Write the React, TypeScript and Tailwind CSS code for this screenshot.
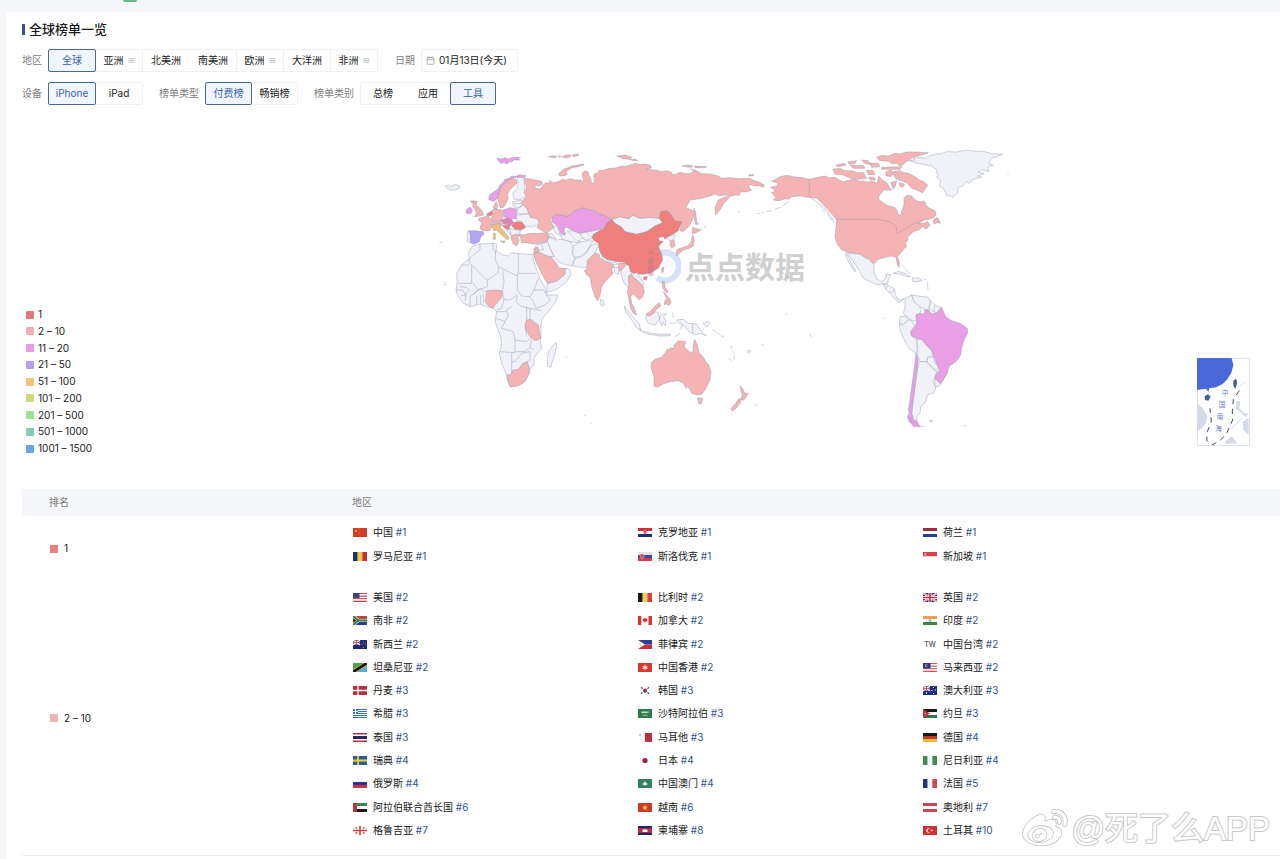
import type { ReactNode } from "react";
import clsx from "clsx";
import { FaWeibo } from "react-icons/fa";
import { FiCalendar, FiMenu } from "react-icons/fi";

type Country = {
    name: string;
    flag: string;
    rank: number;
}

type RankGroup = {
    label: string;
    swatch: string;
    list: string;
    countries: Country[];
}

type Option = {
    label: string;
    menu?: boolean;
}

const RED = '#ef7f7d';
const ROSE = '#f5b3b3';
const PINK = '#e99ee6';
const VIOLET = '#b3a5f0';
const ORANGE = '#f1c07c';
const LAND = '#f1f2f8';

const legend = [
    { label: '1', color: 'bg-[#e07a78]' },
    { label: '2 – 10', color: 'bg-[#f2b0b0]' },
    { label: '11 – 20', color: 'bg-[#e59ce0]' },
    { label: '21 – 50', color: 'bg-[#b5a2ec]' },
    { label: '51 – 100', color: 'bg-[#f0c27a]' },
    { label: '101 – 200', color: 'bg-[#cfd97a]' },
    { label: '201 – 500', color: 'bg-[#9ddf9c]' },
    { label: '501 – 1000', color: 'bg-[#82d0b2]' },
    { label: '1001 – 1500', color: 'bg-[#6aa5ea]' },
];

const regions: Option[] = [
    { label: '全球' },
    { label: '亚洲', menu: true },
    { label: '北美洲' },
    { label: '南美洲' },
    { label: '欧洲', menu: true },
    { label: '大洋洲' },
    { label: '非洲', menu: true },
];

const groups: RankGroup[] = [
    {
        label: '1',
        swatch: 'bg-[#e88381]',
        list: 'h-[47px]',
        countries: [
            { name: '中国', flag: 'cn', rank: 1 },
            { name: '克罗地亚', flag: 'hr', rank: 1 },
            { name: '荷兰', flag: 'nl', rank: 1 },
            { name: '罗马尼亚', flag: 'ro', rank: 1 },
            { name: '斯洛伐克', flag: 'sk', rank: 1 },
            { name: '新加坡', flag: 'sg', rank: 1 },
        ],
    },
    {
        label: '2 – 10',
        swatch: 'bg-[#f3b3b3]',
        list: 'h-[256px]',
        countries: [
            { name: '美国', flag: 'us', rank: 2 },
            { name: '比利时', flag: 'be', rank: 2 },
            { name: '英国', flag: 'gb', rank: 2 },
            { name: '南非', flag: 'za', rank: 2 },
            { name: '加拿大', flag: 'ca', rank: 2 },
            { name: '印度', flag: 'in', rank: 2 },
            { name: '新西兰', flag: 'nz', rank: 2 },
            { name: '菲律宾', flag: 'ph', rank: 2 },
            { name: '中国台湾', flag: 'tw', rank: 2 },
            { name: '坦桑尼亚', flag: 'tz', rank: 2 },
            { name: '中国香港', flag: 'hk', rank: 2 },
            { name: '马来西亚', flag: 'my', rank: 2 },
            { name: '丹麦', flag: 'dk', rank: 3 },
            { name: '韩国', flag: 'kr', rank: 3 },
            { name: '澳大利亚', flag: 'au', rank: 3 },
            { name: '希腊', flag: 'gr', rank: 3 },
            { name: '沙特阿拉伯', flag: 'sa', rank: 3 },
            { name: '约旦', flag: 'jo', rank: 3 },
            { name: '泰国', flag: 'th', rank: 3 },
            { name: '马耳他', flag: 'mt', rank: 3 },
            { name: '德国', flag: 'de', rank: 4 },
            { name: '瑞典', flag: 'se', rank: 4 },
            { name: '日本', flag: 'jp', rank: 4 },
            { name: '尼日利亚', flag: 'ng', rank: 4 },
            { name: '俄罗斯', flag: 'ru', rank: 4 },
            { name: '中国澳门', flag: 'mo', rank: 4 },
            { name: '法国', flag: 'fr', rank: 5 },
            { name: '阿拉伯联合酋长国', flag: 'ae', rank: 6 },
            { name: '越南', flag: 'vn', rank: 6 },
            { name: '奥地利', flag: 'at', rank: 7 },
            { name: '格鲁吉亚', flag: 'ge', rank: 7 },
            { name: '柬埔寨', flag: 'kh', rank: 8 },
            { name: '土耳其', flag: 'tr', rank: 10 },
        ],
    },
];

const rows = (...colors: string[]) => colors.map((c, i) => (
    <rect key={i} y={(i * 9) / colors.length} width="14" height={9 / colors.length} fill={c} />
));

const cols = (...colors: string[]) => colors.map((c, i) => (
    <rect key={i} x={(i * 14) / colors.length} width={14 / colors.length} height="9" fill={c} />
));

const field = (color: string) => <rect width="14" height="9" fill={color} />;

const jack = (
    <>
        <rect width="7" height="5" fill="#2a2f7d" />
        <path d="M0 0L7 5M7 0L0 5" stroke="#fff" strokeWidth="1.2" />
        <path d="M3.5 0V5M0 2.5H7" stroke="#fff" strokeWidth="1.6" />
        <path d="M3.5 0V5M0 2.5H7" stroke="#d0314a" strokeWidth=".8" />
    </>
);

const flags: Record<string, ReactNode> = {
    cn: <>{field('#d23a26')}<circle cx="3" cy="3" r="1.2" fill="#f3a93a" /><path d="M5.5 1h1M6.5 3h1M5.5 5h1" stroke="#f3a93a" strokeWidth=".8" /></>,
    hr: <>{rows('#d8303a', '#fff', '#20306f')}<path d="M5.5 2h3v3L7 6.5 5.5 5z" fill="#d95a6a" /></>,
    nl: rows('#9c2f33', '#fff', '#24458b'),
    ro: cols('#1c2f72', '#f2c53d', '#c22f35'),
    sk: <>{rows('#e6dfe9', '#3b4a9b', '#cf3f4c')}<path d="M2 2h4v3L4 7 2 5z" fill="#cf4a5c" stroke="#fff" strokeWidth=".4" /></>,
    sg: <>{rows('#d9424a', '#fff')}<circle cx="3" cy="2.2" r="1.3" fill="#fff" /><circle cx="3.7" cy="2.2" r="1.2" fill="#d9424a" /></>,
    us: <>{rows('#c9404f', '#fff', '#c9404f', '#fff', '#c9404f', '#fff', '#c9404f')}<rect width="6.5" height="5" fill="#3b4778" /></>,
    be: cols('#191919', '#f4cf55', '#d9403b'),
    gb: (
        <>
            {field('#2d3576')}
            <path d="M0 0L14 9M14 0L0 9" stroke="#fff" strokeWidth="2" />
            <path d="M0 0L14 9M14 0L0 9" stroke="#c8324a" strokeWidth=".7" />
            <path d="M7 0V9M0 4.5H14" stroke="#fff" strokeWidth="3" />
            <path d="M7 0V9M0 4.5H14" stroke="#c8324a" strokeWidth="1.7" />
        </>
    ),
    za: (
        <>
            {rows('#c8433a', '#2b3c86')}
            <path d="M0 0L5.5 4.5 0 9M5 4.5H14" fill="none" stroke="#fff" strokeWidth="3.2" />
            <path d="M0 0L5.5 4.5 0 9M5 4.5H14" fill="none" stroke="#2d7a4b" strokeWidth="2" />
            <path d="M0 1.8L3.5 4.5 0 7.2z" fill="#191919" stroke="#e9b94a" strokeWidth=".6" />
        </>
    ),
    ca: <>{cols('#d8352f', '#fff', '#fff', '#d8352f')}<path d="M7 1.5l1 1.3 1.500.2-.5 2.200-1.600.6L7 7.500l-.4-1.700L5 5.200 4.500 3 6 2.800z" fill="#d8352f" /></>,
    in: <>{rows('#eda04c', '#fff', '#3b8640')}<circle cx="7" cy="4.5" r="1" fill="none" stroke="#4a4f9b" strokeWidth=".6" /></>,
    nz: <>{field('#1f2b70')}{jack}<path d="M10.5 1.5v1M9 4v1M12 3.5v1M10.5 7v1" stroke="#d65a70" /></>,
    ph: <>{rows('#2d3f94', '#c5303c')}<path d="M0 0L7 4.5 0 9z" fill="#fff" /><circle cx="2.2" cy="4.5" r=".9" fill="#efbf4a" /></>,
    tw: <text x="7" y="7" textAnchor="middle" className="text-[7px] font-medium" fill="#555">TW</text>,
    tz: <><path d="M0 0H14L0 9z" fill="#4ea352" /><path d="M14 0V9H0z" fill="#58aed6" /><path d="M0 9L14 0" stroke="#ecc94a" strokeWidth="4" /><path d="M0 9L14 0" stroke="#191919" strokeWidth="2.8" /></>,
    hk: <>{field('#d23b2b')}<path d="M7 1.8v5.4M4.5 3.5l5 2M9.5 3.5l-5 2" stroke="#fff" strokeWidth="1" /></>,
    my: <>{rows('#d8525c', '#fff', '#d8525c', '#fff', '#d8525c', '#fff', '#d8525c')}<rect width="7.5" height="5.5" fill="#2d3a80" /><circle cx="3.5" cy="2.7" r="1.4" fill="#d9cf7d" /><circle cx="4.2" cy="2.7" r="1.1" fill="#2d3a80" /></>,
    dk: <>{field('#b8303f')}<path d="M5 0V9M0 4.5H14" stroke="#fff" strokeWidth="1.3" /></>,
    kr: (
        <>
            {field('#fff')}
            <circle cx="7" cy="4.5" r="2" fill="#c23345" />
            <path d="M5 4.5a2 2 0 0 0 4 0z" fill="#2c4a92" />
            <path d="M3 1.5l1.5 1M3 7.5l1.5-1M11 1.5l-1.5 1M11 7.5l-1.5-1" stroke="#333" strokeWidth="1.2" />
        </>
    ),
    au: <>{field('#1f2d80')}{jack}<path d="M3.5 6.2v1.6M10.5 1v1M9 4v1M12.3 3.5v1M10.5 7v1" stroke="#fff" /></>,
    gr: (
        <>
            {rows('#3674b8', '#fff', '#3674b8', '#fff', '#3674b8', '#fff', '#3674b8', '#fff', '#3674b8')}
            <rect width="5" height="5" fill="#3674b8" />
            <path d="M2.5 0V5M0 2.5H5" stroke="#fff" />
        </>
    ),
    sa: <>{field('#2e7d46')}<path d="M3.5 3.2h7" stroke="#fff" strokeWidth="1.6" strokeDasharray="1.2 .4" /><path d="M4.5 6.2h5" stroke="#fff" strokeWidth=".6" /></>,
    jo: <>{rows('#191919', '#fff', '#2e7a48')}<path d="M0 0L7 4.5 0 9z" fill="#c5303a" /><circle cx="2.2" cy="4.5" r=".6" fill="#fff" /></>,
    th: <><rect width="14" height="9" fill="#a8323f" /><rect y="1.5" width="14" height="6" fill="#fff" /><rect y="3" width="14" height="3" fill="#28295c" /></>,
    mt: <>{cols('#fff', '#bf2f40')}<path d="M2 1v2M1 2h2" stroke="#b9b9b9" strokeWidth=".8" /></>,
    de: rows('#191919', '#c53a24', '#f0b83a'),
    se: <>{field('#2b5f94')}<path d="M5 0V9M0 4.5H14" stroke="#f0cf3f" strokeWidth="1.8" /></>,
    jp: <>{field('#fff')}<circle cx="7" cy="4.5" r="2.6" fill="#a81f38" /></>,
    ng: cols('#3d8a5b', '#fff', '#3d8a5b'),
    ru: rows('#fff', '#2a2f9c', '#cf3346'),
    mo: <>{field('#348062')}<path d="M7 1.8l1.2 2.2 1.5.7-1.2 1.5h-3L4.3 4.7 5.8 4z" fill="#e4f1dc" /></>,
    fr: cols('#22327c', '#fff', '#cf4a52'),
    ae: <>{rows('#3b8650', '#fff', '#191919')}<rect width="4" height="9" fill="#b93a35" /></>,
    vn: <>{field('#cf3a26')}<path d="M7 1.8l.8 1.9h2L8.2 5l.6 2L7 5.9 5.2 7l.6-2-1.6-1.3h2z" fill="#f6d448" /></>,
    at: rows('#c74852', '#fff', '#c74852'),
    ge: <>{field('#fff')}<path d="M7 0V9M0 4.5H14" stroke="#d83a3a" strokeWidth="1.6" /><path d="M2.5 2h1.6M10 2h1.6M2.5 7h1.6M10 7h1.6" stroke="#d83a3a" strokeWidth="1.4" /></>,
    kh: <><rect width="14" height="9" fill="#25255f" /><rect y="2.2" width="14" height="4.6" fill="#c22e48" /><path d="M4.5 6V4l1-.8.8.8.7-1.5.7 1.5.8-.8 1 .8v2z" fill="#fff" /></>,
    tr: <>{field('#d2302f')}<circle cx="5.5" cy="4.5" r="2.2" fill="#fff" /><circle cx="6.2" cy="4.5" r="1.7" fill="#d2302f" /><circle cx="9" cy="4.5" r=".8" fill="#fff" /></>,
};

// Country outlines, grouped by the part of the map they belong to
const eurasia = [
    { fill: LAND, d: 'M45 138L55 135 62 140 75 134 88 137 90 144 75 150 60 150 50 144Z' },
    { fill: LAND, d: 'M262 112L280 112 285 125 283 150 288 165 275 178 252 178 248 160 262 145 265 130Z' },
    { fill: LAND, d: 'M248 185L276 180 278 195 265 205 250 200ZM250 192L277 189M262 205L280 195 292 207 297 220 262 222Z' },
    { fill: LAND, d: 'M260 225L298 222 325 238 328 250 308 262 290 258 282 262 275 245 258 240Z' },
    { fill: LAND, d: 'M225 262L250 268 272 272 268 283 245 287 235 275ZM240 266L243 285' },
    { fill: LAND, d: 'M112 275L120 275 122 290 120 308 112 306Z' },
    { fill: LAND, d: 'M345 280L368 282 378 298 360 290ZM365 255L382 262 392 285 378 282 370 268Z' },
    { fill: LAND, d: 'M392 285L405 283 412 272 430 273 450 281 475 275 515 268 490 285 488 295 470 300 455 295 445 308 420 305 395 298ZM415 275L435 297 455 307M450 282L462 297M470 276L480 290 490 288' },
    { fill: LAND, d: 'M357 290L375 300 395 298 420 305 430 318 428 340 435 355 425 378 400 372 385 365 370 345 360 325 352 305Z' },
    { fill: LAND, d: 'M430 318L445 308 470 302 490 303 480 318 470 335 450 350 432 352 428 340Z' },
    { fill: LAND, d: 'M435 355L455 350 472 335 482 318 498 310 505 320 490 345 475 362 470 382 455 382 428 378Z' },
    { fill: LAND, d: 'M318 315L340 310 352 305 360 325 372 350 350 350 330 340 315 335ZM335 312L340 328 322 333' },
    { fill: LAND, d: 'M352 432L380 424 405 403 406 385 420 390 424 402 410 425 385 445 350 458Z' },
    { fill: LAND, d: 'M515 348L545 366 560 368 560 375 545 372 520 360ZM552 380L564 382 567 402 555 399ZM512 478L520 483 523 495 515 499 510 491Z' },
    { fill: LAND, d: 'M575 385L588 372 598 380 600 395 608 405 595 415 598 440 600 460 590 435 582 430 572 400Z' },
    { fill: LAND, d: 'M545 238L570 230 597 236 608 225 630 235 660 232 688 235 698 248 675 258 650 275 620 283 585 275 575 262 555 250Z' },
    { fill: PINK, d: 'M200 55L214 57 225 53 236 57 245 53 272 52 262 57 270 60 250 60 246 66 240 64 232 72 222 68 212 70 205 62Z' },
    { fill: PINK, d: 'M178 165L176 178 190 185 203 175 207 160 212 145 225 130 240 118 260 112 285 112 288 107 270 104 258 109 245 108 238 115 225 118 220 126 210 135 206 144 200 150 188 158Z' },
    { fill: PINK, d: 'M218 210L240 203 260 207 258 235 240 238 222 230Z' },
    { fill: PINK, d: 'M110 208L120 202 127 208 124 220 112 222 108 215Z' },
    { fill: PINK, d: 'M367 232L378 224 395 225 410 229 425 222 430 214 440 210 460 203 475 209 495 212 508 222 520 225 545 238 530 250 522 265 505 268 490 272 470 275 450 280 430 272 410 262 402 266 405 285 392 280 385 262 372 250 365 245Z' },
    { fill: '#dd86b4', d: 'M212 240L232 234 246 240 252 248 240 258 222 252Z' },
    { fill: VIOLET, d: 'M115 272L135 272 160 275 162 282 152 292 148 305 132 313 121 308 122 290 120 278Z' },
    { fill: ROSE, d: 'M283 115L305 118 335 124 337 133 328 137 312 136 318 145 330 148 340 135 346 128 358 130 358 122 370 128 385 125 398 118 408 121 420 116 436 120 452 120 462 126 458 112 456 100 464 93 474 95 478 108 484 120 484 132 492 128 494 118 490 108 496 100 505 98 505 92 522 90 540 85 556 84 575 78 585 80 600 75 615 70 630 73 645 72 660 75 665 83 650 88 680 91 695 95 710 92 722 95 728 104 738 103 750 97 768 101 785 100 790 92 805 95 815 101 840 102 865 108 875 115 900 113 930 116 960 115 972 122 985 125 1003 135 1000 142 987 137 975 138 962 134 955 140 965 150 950 156 932 155 928 166 915 165 900 170 890 164 870 168 855 162 840 168 825 172 810 176 780 180 774 192 768 203 790 212 790 232 780 255 768 268 758 275 750 272 755 245 735 243 722 222 710 212 692 215 688 235 660 232 630 235 608 225 597 236 570 230 545 238 520 225 508 222 495 212 475 209 460 203 440 210 430 214 425 222 410 229 395 225 378 224 367 232 360 240 372 262 355 275 350 280 330 268 320 262 328 250 325 238 300 232 297 222 290 205 276 190 283 175 290 168 282 158 287 150 290 138 283 130Z' },
    { fill: ROSE, d: 'M385 103L392 95 400 88 412 84 425 78 440 76 462 72 460 76 425 84 408 95 412 104 400 108 390 108Z' },
    { fill: ROSE, d: 'M355 50L370 47 382 50 372 53ZM386 47L394 49 388 52ZM396 51L410 44 424 46 418 52 406 54ZM426 45L446 42 444 48 432 50ZM560 48L585 45 605 52 600 58 580 56ZM600 58L618 58 623 63 608 62ZM755 78L775 75 790 79 778 82ZM794 78L830 80 825 83 796 83ZM782 86L800 92 785 90ZM957 104L971 104 971 107 957 108Z' },
    { fill: ROSE, d: 'M203 175L208 155 214 140 230 125 245 115 258 118 262 128 250 140 238 150 232 165 235 175 228 190 222 200 212 205 208 195Z' },
    { fill: ROSE, d: 'M190 200L198 185 203 195 200 207 192 207ZM187 210L200 207 215 210 220 230 212 243 190 245 185 230Z' },
    { fill: ROSE, d: 'M147 235L165 230 172 226 188 240 185 260 180 272 160 272 150 265 155 248 145 240ZM190 248L215 243 222 250 205 258 188 256Z' },
    { fill: ROSE, d: 'M122 182L132 184 126 190ZM130 182L142 184 138 195 150 205 158 215 160 225 145 229 132 230 140 220 135 208 128 198Z' },
    { fill: ROSE, d: 'M243 288L258 283 270 285 262 292 268 302 260 318 250 312 245 300ZM268 283L280 285 300 280 325 280 352 278 358 292 350 305 330 310 310 312 290 308 275 308 272 295Z' },
    { fill: ROSE, d: 'M310 340L328 337 345 345 365 352 378 368 388 385 404 385 405 402 380 422 352 430 340 410 325 380 315 358ZM312 325L324 322 326 336 312 338Z' },
    { fill: ROSE, d: 'M497 338L510 345 508 352 522 362 545 372 552 378 545 388 550 400 540 410 525 425 515 440 510 465 503 483 495 470 485 440 480 410 470 405 463 392 472 385 472 362 488 345ZM565 370L590 370 580 385 570 395 565 380Z' },
    { fill: RED, d: 'M170 222L185 213 187 222 180 228 172 226ZM250 250L258 245 275 246 288 262 275 270 255 268 245 258ZM215 255L240 258 235 270 222 262Z' },
    { fill: RED, d: 'M545 238L530 250 522 265 490 283 487 292 490 300 505 310 508 330 515 345 530 358 560 365 582 367 598 378 602 395 615 402 640 403 660 400 685 385 698 360 695 340 685 320 700 303 688 303 685 293 700 290 705 298 725 285 745 272 755 245 735 243 722 222 710 212 692 215 688 235 698 248 675 258 650 275 620 283 585 275 575 262 555 250Z' },
    { fill: ORANGE, d: 'M185 255L210 250 212 262 228 282 238 293 232 300 215 285 200 270 190 272ZM210 303L225 303 222 310ZM190 280H196V298H190Z' },
];

const eastAsia = [
    { fill: ROSE, d: 'M85 408L95 402 100 412 112 420 128 435 133 455 128 470 118 480 108 470 100 462 92 470 95 490 88 485 82 455 88 435Z' },
    { fill: LAND, d: 'M95 402L112 398 120 412 132 432 128 436 112 420 100 412Z' },
    { fill: ROSE, d: 'M88 485L98 495 105 510 110 525 100 520 92 505ZM138 522L150 515 165 498 178 488 182 498 170 508 158 522 145 528Z' },
    { fill: ROSE, d: 'M185 385L191 380 192 388 188 400 184 392ZM185 425L193 423 195 443 205 455 199 458 189 446ZM195 480L207 472 213 487 207 497 199 492 193 494ZM190 455L198 463 204 471 198 473Z' },
    { fill: RED, d: 'M132 410L142 410 139 420 131 418Z' },
    { fill: LAND, d: 'M198 293L225 282 222 298 210 303Z' },
    { fill: ROSE, d: 'M212 303L222 300 225 318 215 325 210 315ZM228 338L232 328 250 322 262 318 272 308 278 285 283 300 280 318 265 326 250 330 238 340 230 347ZM278 262L293 267 303 270 288 278 276 282Z' },
    { fill: ROSE, d: 'M282 205L287 215 290 245 295 253 287 253 282 233ZM355 180L380 168 388 172 372 190 360 210 347 225 345 205 348 195ZM302 268L308 265M312 262L318 258' },
    { fill: ROSE, d: 'M500 215L515 212M525 208L545 200M548 196L565 186M415 214L420 215M470 221L480 220M485 220L490 218' },
    { fill: LAND, d: 'M545 398L552 400M555 402L560 406M562 408L568 412 564 416Z' },
];

const oceania = [
    { fill: ROSE, d: 'M155 245L165 238 185 232 198 215 202 208 210 210 210 203 222 205 222 196 228 190 232 184 240 183 258 185 252 200 268 215 278 218 280 195 284 178 292 195 298 218 310 232 318 246 325 252 333 275 330 300 318 325 305 343 290 345 275 340 268 325 262 320 258 325 250 310 235 302 210 305 190 312 172 322 162 318 162 290 153 262Z' },
    { fill: ROSE, d: 'M293 353L308 355 305 370 297 373ZM420 318L428 326 433 338 445 341 437 353 431 361 423 357 427 345 423 333ZM425 355L420 370 408 385 398 393 392 387 406 371 416 357Z' },
    { fill: LAND, d: 'M72 78L85 95 100 112 118 132 122 150 108 142 92 115 78 98ZM118 150L145 158 180 163 212 162 210 167 180 168 140 162Z' },
    { fill: LAND, d: 'M138 105L150 108 168 95 175 100 180 115 165 135 145 130 138 118ZM180 105L200 102 190 110 198 122 196 137 190 127 184 137 178 122Z' },
    { fill: LAND, d: 'M230 120L250 118 265 130 290 132 305 155 320 168 300 160 285 165 268 155 250 135 240 132ZM278 131V161M310 130L325 125 330 130 318 142Z' },
    { fill: LAND, d: 'M338 148L348 156M350 158L360 164M362 166L372 171M393 195L395 207M398 212L402 220M383 233L395 243M402 226L403 240M440 213L448 210 453 213 445 219ZM484 194L492 196M218 98L220 115M210 130L230 128M238 125L248 135 240 150M225 170L240 160' },
    { fill: LAND, d: 'M463 374L470 377M630 160L634 172M556 100L562 103' },
];

const northAmerica = [
    { fill: ROSE, d: 'M-85 124L-72 118 -60 110 -40 106 -20 110 0 112 30 118 52 112 75 108 88 113 105 112 118 120 130 125 148 120 165 118 178 124 190 122 202 127 215 123 232 130 236 108 245 118 262 130 268 142 275 150 250 150 246 158 238 165 236 176 242 183 260 195 285 203 292 212 292 220 302 228 306 210 312 195 312 175 322 165 335 168 342 178 352 183 362 186 372 182 378 195 388 205 405 212 408 225 398 235 375 240 355 250 372 250 382 244 390 255 378 268 368 258 360 268 340 275 322 292 325 300 315 308 320 318 305 335 292 350 298 365 298 382 292 375 288 352 275 348 258 352 235 358 225 368 218 372 210 358 195 352 180 342 150 338 125 330 112 312 105 292 108 262 110 240 98 225 80 205 65 188 50 175 25 172 0 168 -25 170 -35 178 -45 176 -62 182 -80 180 -72 172 -80 165 -85 158 -74 152 -88 142 -70 138 -65 130Z' },
    { fill: 'none', d: 'M108 238H235L268 245 288 258 292 280 305 272 325 262 340 252 358 245M28 117V172M30 172L50 185 70 200 85 220 102 240M62 198L70 212 76 214M82 220L88 232 98 240M92 236L104 248' },
    { fill: ROSE, d: 'M400 240L412 232 422 250 410 248 402 252ZM280 95L300 92 312 98 325 100 345 110 358 120 372 125 383 135 375 148 368 158 350 150 335 145 322 130 305 122 290 118 282 108Z' },
    { fill: ROSE, d: 'M98 88L120 85 135 92 155 92 172 98 190 97 200 115 175 118 150 115 130 105 105 103ZM108 75L133 70 138 76 113 80ZM145 65L170 62 165 70 147 72ZM185 60L205 62 213 74 193 70ZM150 75L190 77 195 85 160 85ZM200 90L220 92 225 104 205 104ZM210 70L235 70 240 80 215 82ZM205 112L222 112 226 120 212 120Z' },
    { fill: ROSE, d: 'M230 52L245 46 265 48 285 40 300 42 320 36 345 36 385 38 365 45 340 52 328 60 318 65 308 75 300 78 290 70 275 72 268 64 240 62ZM258 95L273 90 281 98 273 110 258 107ZM245 82L305 80 300 88 245 88ZM272 128L290 122 285 140 280 148ZM298 128L314 132 308 142 298 138Z' },
    { fill: LAND, d: 'M328 62L345 60 340 55 360 52 375 55 395 45 420 42 440 35 470 36 500 30 525 34 545 33 580 42 608 43 575 55 565 70 580 76 562 82 568 95 545 88 534 96 552 102 532 108 545 112 520 118 508 130 500 125 488 138 475 142 472 160 460 172 440 165 430 145 418 138 422 120 410 112 416 104 408 98 412 90 395 78 365 72 345 68ZM622 104L626 105' },
    { fill: LAND, d: 'M140 335L150 340 180 343 195 353 210 360 222 375 222 395 228 415 245 425 258 415 260 402 272 405 265 420 262 432 248 430 235 435 210 425 190 415 180 395 162 368 148 348ZM138 338L146 353 156 373 168 395 162 392 148 370 136 345Z' },
    { fill: LAND, d: 'M248 432L262 435 282 445 286 460 290 475 305 480 312 475 300 488 285 478 272 462 258 448ZM262 436L258 447M284 450L270 458M280 400L295 394 315 400 332 410 320 410 300 402ZM338 413L358 415 366 421 351 425 336 423ZM305 375L315 385M318 388L328 402M382 425L384 450M372 416L380 420' },
];

const southAmerica = [
    { fill: LAND, d: 'M195 115L215 105 222 125 240 135 242 160 228 165 230 185 215 180 200 170 190 160 195 140Z' },
    { fill: LAND, d: 'M215 105L235 108 265 112 272 125 265 145 268 152 255 148 240 140 222 125Z' },
    { fill: LAND, d: 'M272 122L285 135 300 142 302 150 290 158 278 155 268 145ZM284 136L282 156' },
    { fill: LAND, d: 'M180 170L198 168 205 180 188 195 178 188Z' },
    { fill: LAND, d: 'M178 190L188 195 205 180 215 182 225 198 212 215 215 228 230 238 232 270 228 280 210 268 195 245 182 215Z' },
    { fill: LAND, d: 'M232 238L245 238 262 258 275 272 280 290 265 292 260 305 240 305 232 285Z' },
    { fill: LAND, d: 'M262 292L280 290 285 310 296 318 290 335 275 320 262 308Z' },
    { fill: LAND, d: 'M240 305L260 305 275 322 290 335 286 350 280 365 288 382 282 398 262 405 258 425 242 440 240 460 230 470 232 485 222 480 215 460 220 420 225 380 230 340 235 315Z' },
    { fill: LAND, d: 'M286 352L302 372 296 380 284 378ZM268 482L278 482 276 486ZM370 496L378 499M130 172L134 178M240 500L255 498' },
    { fill: PINK, d: 'M228 165L238 160 252 162 255 148 268 152 275 162 290 158 300 148 304 140 310 155 318 172 335 182 360 190 382 205 383 220 372 240 365 262 362 285 348 305 328 318 322 340 310 360 302 372 288 358 285 350 298 330 290 312 282 290 275 270 258 255 245 238 230 235 215 228 212 215 225 200 230 185Z' },
    { fill: PINK, d: 'M228 280L235 300 232 325 228 355 224 390 218 430 215 460 220 480 232 485 240 500 220 499 205 480 202 468 208 462 205 450 210 420 215 380 222 330 226 300ZM206 470L216 478M210 484L224 490' },
];

const africa = [
    { fill: LAND, d: 'M128 18L150 12 192 10 200 14 198 32 218 45 235 48 245 38 262 40 300 44 308 42 310 60 320 90 330 118 345 142 350 165 383 165 378 185 355 215 338 235 333 255 333 290 330 300 335 325 322 340 312 355 312 375 300 385 295 405 280 428 262 438 240 440 232 420 228 400 215 370 208 340 215 315 212 290 200 260 195 240 200 215 190 205 170 200 150 192 120 200 98 188 82 165 78 150 82 125 80 100 95 75 118 55 115 40Z' },
    { fill: 'none', d: 'M265 40V100H318M198 30L195 55 205 80 225 90 262 108M188 10L190 28 198 40M118 58L135 40 150 30 150 12M118 58V68L165 115 172 120 205 98V80M95 75H118M125 75V130H85M128 128L145 150 172 140 172 120' },
    { fill: 'none', d: 'M218 92L222 125 218 150M262 100V150L275 168 300 170 312 150 325 115M218 178L240 180 262 165M262 168L258 185 275 200 300 205M245 200L228 210 235 225 225 245 215 265 250 275 255 300 290 305 305 290M290 200V240L285 260 290 290' },
    { fill: 'none', d: 'M312 150L340 150 360 180 345 195 318 205 308 180 300 172M300 205L333 212M300 205V238M208 335L255 338V300M255 335L285 335 300 322 305 300M245 340V400M245 365H255L275 340M275 340L300 335V360L285 370M300 322L312 330M218 155L222 178 215 205 200 210M200 215H228M198 235L212 240 225 245' },
    { fill: 'none', d: 'M78 150H98L108 170M110 155L105 182M90 140L110 142 120 155M92 168L105 165M120 170V200M140 168V195M152 165V193M160 160V188M120 170L150 145 168 155M145 150L128 165' },
    { fill: ROSE, d: 'M232 405L245 402 248 390 265 388 278 370 292 365 298 385 298 400 285 425 265 437 242 440 235 425Z' },
    { fill: ROSE, d: 'M290 240L302 238 325 255 328 275 333 295 315 302 300 290 288 270 286 255ZM170 152L195 150 218 152 215 172 200 190 188 205 175 198 166 185 168 165Z' },
    { fill: LAND, d: 'M355 335L370 315 378 308 380 322 372 350 362 382 352 378 352 355ZM273 413L279 410 282 414 278 417ZM402 352L406 356M408 348L412 351M462 525L468 528M482 548L486 551M42 125L46 128M40 135L48 132M28 6L36 8' },
];

const mapParts = [
    { offset: 'translate(0 300)', shapes: africa },
    { offset: 'translate(0 0)', shapes: eurasia },
    { offset: 'translate(510 0)', shapes: eastAsia },
    { offset: 'translate(510 420)', shapes: oceania },
    { offset: 'translate(1110 0)', shapes: northAmerica },
    { offset: 'translate(1230 360)', shapes: southAmerica },
];

function WorldMap() {
    return (
        <div className="relative self-start">
            <svg viewBox="0 0 1800 900" className="w-full" stroke="#8f97ae" strokeWidth="1.3" strokeLinejoin="round">
                {mapParts.map((part) => (
                    <g key={part.offset} transform={part.offset}>
                        {part.shapes.map((shape) => (
                            <path key={shape.d} d={shape.d} fill={shape.fill} />
                        ))}
                    </g>
                ))}
            </svg>
            <div className="absolute top-[108px] left-[213px] flex items-center gap-1 text-[#8c8c8c] opacity-40">
                <svg viewBox="0 0 38 38" className="size-[38px]" fill="none" stroke="#9db9f2">
                    <path d="M8 3v3M8 10v18" strokeWidth="5" stroke="#b07890" />
                    <path d="M18 5a14 14 0 1 1-4 25" strokeWidth="6" />
                </svg>
                <span className="text-[30px] leading-[38px] font-bold">点点数据</span>
            </div>
        </div>
    )
}

function SouthSeaInset() {
    return (
        <svg viewBox="81 54 159 264" className="mb-[10px] ml-[167px] h-[88px] w-[53px] self-end">
            <rect x="82" y="55" width="156" height="261" fill="#fff" stroke="#ccd5e6" strokeWidth="2" />
            <path d="M81 190L95 200 112 228 108 250 92 268 81 275ZM200 182L212 185 208 205 222 218 235 222 228 232 210 215 198 205ZM218 245L236 235V285L220 270ZM165 305L185 288 202 310 168 312Z" fill="#d5daeb" />
            <path d="M185 265L215 235M208 140L225 125" stroke="#d5daeb" strokeWidth="3" />
            <path d="M81 54H185L190 75 184 98 172 118 158 132 138 142 118 145 115 156 108 146 81 150Z" fill="#4a68d8" />
            <path d="M104 168L114 163 122 170 115 182 105 180ZM190 122L198 116 202 128 196 146 190 138Z" fill="#41629e" />
            <path d="M208 152L190 178 187 215 188 240 170 280 150 302 128 314 110 302 112 275 124 245 120 205" fill="none" stroke="#3f4a6b" strokeWidth="3" strokeDasharray="16 14" />
            <g fill="#6780d8" className="text-[20px]" textAnchor="middle">
                <text x="165" y="164">中</text>
                <text x="156" y="200">国</text>
                <text x="150" y="237">南</text>
                <text x="146" y="273">海</text>
            </g>
        </svg>
    )
}

function Filter({ title, options, active, width = 'min-w-[48px]' }: { title: string, options: Option[], active: string, width?: string }) {
    return (
        <div className="flex items-center gap-[6px]" role="group" aria-label={title}>
            <span className="text-[#808080]">{title}</span>
            <div className="flex rounded-[2px] border border-[#eff0f3]">
                {options.map(({ label, menu }) => (
                    <button
                        key={label}
                        type="button"
                        aria-pressed={label === active}
                        className={clsx(
                            '-m-px flex h-[23px] items-center justify-center gap-1 border px-1 not-last:mr-0',
                            width,
                            label === active
                                ? 'relative rounded-[2px] border-[#4a6796] bg-[#f0f6ff] text-[#3a5fa8]'
                                : 'border-transparent',
                            menu && 'border-x-[#eff0f3]',
                        )}
                    >
                        {label}
                        {menu && <FiMenu className="size-[7px] text-[#999]" />}
                    </button>
                ))}
            </div>
        </div>
    )
}

export default function App() {
    return (
        <div className="min-h-screen overflow-x-hidden bg-[#f5f7fb] pl-[6px] font-['Inter','Noto_Sans_CJK_SC',sans-serif] text-[10px] leading-[15px] text-[#1a1a1a]">
            <header className="h-3">
                <div className="ml-[117px] h-[2px] w-[14px] rounded-b bg-[#63bd82]" />
            </header>
            <main className="relative min-h-[847px] rounded-tl-[2px] bg-white pl-4">
                <h1 className="flex items-center gap-1 pt-2 text-[13px] leading-[19px] font-medium">
                    <span className="h-[11px] w-[3px] bg-[#3a4f9c]" />
                    全球榜单一览
                </h1>

                <div className="mt-[10px] flex items-center gap-[17px]">
                    <Filter title="地区" options={regions} active="全球" />
                    <div className="flex items-center gap-[6px]">
                        <label htmlFor="date" className="text-[#808080]">日期</label>
                        <div className="flex h-[23px] items-center gap-1 rounded-[2px] border border-[#eff0f3] pl-1">
                            <FiCalendar className="size-[9px] text-[#999]" />
                            <input id="date" readOnly value="01月13日(今天)" className="w-[78px] outline-none" />
                        </div>
                    </div>
                </div>
                <div className="mt-[10px] flex items-center gap-4">
                    <Filter title="设备" options={[{ label: 'iPhone' }, { label: 'iPad' }]} active="iPhone" />
                    <Filter title="榜单类型" options={[{ label: '付费榜' }, { label: '畅销榜' }]} active="付费榜" width="min-w-[47px]" />
                    <Filter title="榜单类别" options={[{ label: '总榜' }, { label: '应用' }, { label: '工具' }]} active="工具" width="min-w-[46px]" />
                </div>

                <section className="mt-[35px] mb-[33px] grid h-[316px] grid-cols-[408px_minmax(0,600px)_1fr]">
                    <ul className="flex h-[149px] flex-col justify-between self-end pl-1">
                        {legend.map((item) => (
                            <li key={item.label} className="flex items-center gap-1">
                                <span className={clsx('size-2 rounded-[1px]', item.color)} />
                                {item.label}
                            </li>
                        ))}
                    </ul>
                    <WorldMap />
                    <SouthSeaInset />
                </section>

                <table className="w-full table-fixed border-collapse">
                    <thead>
                        <tr className="h-[27px] bg-[#f6f7fa] text-left text-[#777]">
                            <th className="w-[303px] pl-[27px] font-normal">排名</th>
                            <th className="pl-[27px] font-normal">地区</th>
                        </tr>
                    </thead>
                    <tbody>
                        {groups.map((group) => (
                            <tr key={group.label} className="last:border-b last:border-[#eceef2]">
                                <td className="pl-[28px] align-middle">
                                    <div className="flex items-center gap-[6px]">
                                        <span className={clsx('size-2', group.swatch)} />
                                        {group.label}
                                    </div>
                                </td>
                                <td className="pt-[5px] pr-[72px] pb-[13px] pl-[28px]">
                                    <ul className={clsx('grid auto-rows-fr grid-cols-3', group.list)}>
                                        {group.countries.map(({ name, flag, rank }) => (
                                            <li key={flag} className="flex items-center gap-[6px]">
                                                <svg viewBox="0 0 14 9" className="h-[9px] w-[14px] shrink-0">{flags[flag]}</svg>
                                                <span>
                                                    {name} <span className="text-[#33548f]">#{rank}</span>
                                                </span>
                                            </li>
                                        ))}
                                    </ul>
                                </td>
                            </tr>
                        ))}
                    </tbody>
                </table>

                <div className="absolute right-[10px] bottom-2 flex items-center gap-1 font-['Liberation_Sans','Noto_Sans_CJK_SC',sans-serif] text-[33px] leading-[44px] text-white">
                    <FaWeibo className="size-[44px] overflow-visible stroke-[#c4c4c4] stroke-[20px] [paint-order:stroke_fill]" />
                    <span className="[paint-order:stroke_fill] [-webkit-text-stroke:2px_#c8c8c8]">@死了么APP</span>
                </div>
            </main>
        </div>
    )
}
